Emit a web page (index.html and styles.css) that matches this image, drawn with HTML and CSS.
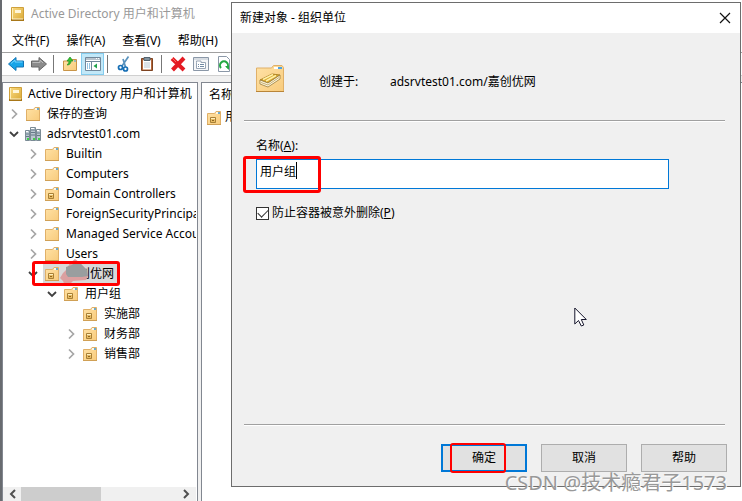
FILE: index.html
```html
<!DOCTYPE html>
<html lang="zh-CN">
<head>
    <meta charset="UTF-8">
    <meta name="viewport" content="width=device-width, initial-scale=1.0">
    <title>Active Directory 用户和计算机</title>
    <link rel="stylesheet" href="styles.css">
</head>
<body>
    <!-- Shared icons -->
    <svg class="icon-defs" aria-hidden="true">
        <defs>
            <linearGradient id="gold" x1="0" y1="0" x2="1" y2="1">
                <stop offset="0" stop-color="#ffe2a6"/>
                <stop offset="1" stop-color="#f8cb7c"/>
            </linearGradient>
            <linearGradient id="book" x1="0" y1="0" x2="1" y2="1">
                <stop offset="0" stop-color="#fbdc84"/>
                <stop offset="1" stop-color="#d9a834"/>
            </linearGradient>
        </defs>
        <symbol id="icon-folder" viewBox="0 0 16 16">
            <path d="M1.500 14.500V3.500h7l1.500-2h4.500v13z" fill="url(#gold)" stroke="#e0b068"/>
            <path d="M10 3h2" stroke="#fff" stroke-width="1.500"/>
            <path d="M12 3h2" stroke="#3d9be0" stroke-width="1.500"/>
            <path d="M1 14.500h14" stroke="#d0a055"/>
        </symbol>
        <symbol id="icon-ou" viewBox="0 0 16 16">
            <use href="#icon-folder"/>
            <path d="M4.500 7.500h5v5h-5z" fill="#e8bb62" stroke="#a88036"/>
            <path d="M5 8.500h4" stroke="#fff0c0"/>
            <path d="M6 10.500h2" stroke="#8d6420"/>
        </symbol>
        <symbol id="icon-book" viewBox="0 0 16 16">
            <path d="M1.500 1.500h12v13h-12z" fill="url(#book)" stroke="#cfa03a"/>
            <path d="M2.500 2v11" stroke="#fff0b8"/>
            <path d="M5 4h6v3H5z" fill="#fff6d8"/>
            <path d="M1 14h13" stroke="#a87718" stroke-width="2"/>
            <path d="M2 13h11" stroke="#fff3cc"/>
        </symbol>
        <symbol id="icon-domain" viewBox="0 0 16 16">
            <path d="M.5 4.500h4v10h-4zM11.500 3.500h4v11h-4zM5.500 1.500h5v13h-5z" fill="#bac7cf" stroke="#7a8b95"/>
            <path d="M6 4h4M6 6.500h4M6 9h4M1 8h3M12 7h3M1 10.500h3M12 9.500h3" stroke="#65798a"/>
            <path d="M6 2.500h3M1 5.500h2M12 4.500h2" stroke="#fff"/>
            <path d="M2 12h2v2H2zM8 12h2v2H8zM13 12h2v2h-2z" fill="#3fd24a"/>
        </symbol>
        <symbol id="icon-right" viewBox="0 0 12 12">
            <path d="M4 1.500L8.500 6 4 10.500" fill="none" stroke="#a6a6a6" stroke-width="1.700"/>
        </symbol>
        <symbol id="icon-down" viewBox="0 0 12 12">
            <path d="M2 4l4 4 4-4" fill="none" stroke="#404040" stroke-width="1.800"/>
        </symbol>
    </svg>

    <main class="console">
        <header class="console-title">
            <svg class="icon"><use href="#icon-book"/></svg>
            <h1>Active Directory 用户和计算机</h1>
        </header>

        <nav class="menu">
            <a href="#">文件(F)</a>
            <a href="#">操作(A)</a>
            <a href="#">查看(V)</a>
            <a href="#">帮助(H)</a>
        </nav>

        <div class="toolbar">
            <button type="button" aria-label="后退">
                <svg viewBox="0 0 16 16"><path d="M.5 8L8 1.500V5h7.500v6H8v3.500z" fill="#18a4e8" stroke="#1274b4"/><path d="M3 7.500L7 4v2h7.500" fill="none" stroke="#74d4ff"/></svg>
            </button>
            <button type="button" aria-label="前进">
                <svg viewBox="0 0 16 16"><path d="M15.500 8L8 1.500V5H.5v6H8v3.500z" fill="#8b8b8b" stroke="#666"/><path d="M1.500 6.500H9V4l3 3" fill="none" stroke="#bbb"/></svg>
            </button>
            <span class="separator"></span>
            <button type="button" aria-label="上一级">
                <svg viewBox="0 0 16 16"><path d="M1.500 14.500V5H6l2-1.500h6.500v11z" fill="url(#gold)" stroke="#c99548"/><path d="M5 9c3 0 4-2 4-4h2L8 1 5 5h2c0 2-1 3-2 4z" fill="#35c52c" stroke="#1f8d22" stroke-width=".7"/><path d="M12 5h2" stroke="#3d9be0"/></svg>
            </button>
            <button type="button" class="pressed" aria-label="显示控制台树">
                <svg viewBox="0 0 16 16"><path d="M.5 1.500h15v13H.5z" fill="#fff" stroke="#71879a"/><path d="M1 3h14M1 5.500h14M6.500 6v8" stroke="#71879a"/><path d="M11 2.500h1M13 2.500h1" stroke="#fff"/><path d="M2 8h1M4 8h1M2 10h1M4 10h1M2 12h1M4 12h1" stroke="#2788c8"/><path d="M12 7.500v5L8.500 10z" fill="#21a34a"/></svg>
            </button>
            <span class="separator"></span>
            <button type="button" aria-label="剪切">
                <svg viewBox="0 0 16 16"><path d="M12.500.5L6 10M7 3l2.500 8" fill="none" stroke="#5b93be" stroke-width="1.700"/><circle cx="4.500" cy="11.500" r="2" fill="none" stroke="#176fb5" stroke-width="1.700"/><circle cx="9.500" cy="13" r="2" fill="none" stroke="#176fb5" stroke-width="1.700"/></svg>
            </button>
            <button type="button" aria-label="粘贴">
                <svg viewBox="0 0 16 16"><path d="M2.500 2.500h11v12h-11z" fill="#b5683c" stroke="#7e4321"/><path d="M4 4h8v9.500H4z" fill="#fff"/><path d="M5 1.500h6v3H5z" fill="#8193a0" stroke="#536471"/><path d="M5 7h6M5 9h6M5 11h6" stroke="#b8c6d2"/></svg>
            </button>
            <span class="separator"></span>
            <button type="button" aria-label="删除">
                <svg viewBox="0 0 16 16"><path d="M2 2.500L14 14M14 2L2.500 14" stroke="#e41b23" stroke-width="4"/><path d="M2 2l4 4" stroke="#ff6a62"/></svg>
            </button>
            <button type="button" aria-label="属性">
                <svg viewBox="0 0 16 16"><path d="M.5 1.500h15v13H.5z" fill="#f5f6f8" stroke="#8b98a8"/><path d="M1 3h14" stroke="#b9c3cd"/><path d="M3.500 6.500V5H8v1.500h4.500v6h-9z" fill="#fff" stroke="#98a5b5"/><path d="M5 8.500h1M7 8.500h4M5 10.500h1M7 10.500h4" stroke="#7189a3"/></svg>
            </button>
            <button type="button" aria-label="刷新">
                <svg viewBox="0 0 16 16"><path d="M2.500.5h8l3 3v12h-11z" fill="#fff" stroke="#8b98a8"/><path d="M5 12a4 4 0 1 1 6 0" fill="none" stroke="#23a842" stroke-width="2"/><path d="M9 10h4v4z" fill="#23a842"/></svg>
            </button>
        </div>

        <div class="panes">
            <section class="tree-pane">
                <div class="tree">
                    <div class="node root"><svg class="icon"><use href="#icon-book"/></svg><span>Active Directory 用户和计算机</span></div>
                    <ul>
                        <li><div class="node"><svg class="arrow"><use href="#icon-right"/></svg><svg class="icon"><use href="#icon-folder"/></svg><span>保存的查询</span></div></li>
                        <li>
                            <div class="node"><svg class="arrow"><use href="#icon-down"/></svg><svg class="icon"><use href="#icon-domain"/></svg><span>adsrvtest01.com</span></div>
                            <ul>
                                <li><div class="node"><svg class="arrow"><use href="#icon-right"/></svg><svg class="icon"><use href="#icon-folder"/></svg><span>Builtin</span></div></li>
                                <li><div class="node"><svg class="arrow"><use href="#icon-right"/></svg><svg class="icon"><use href="#icon-folder"/></svg><span>Computers</span></div></li>
                                <li><div class="node"><svg class="arrow"><use href="#icon-right"/></svg><svg class="icon"><use href="#icon-ou"/></svg><span>Domain Controllers</span></div></li>
                                <li><div class="node"><svg class="arrow"><use href="#icon-right"/></svg><svg class="icon"><use href="#icon-folder"/></svg><span>ForeignSecurityPrincipals</span></div></li>
                                <li><div class="node"><svg class="arrow"><use href="#icon-right"/></svg><svg class="icon"><use href="#icon-folder"/></svg><span>Managed Service Accounts</span></div></li>
                                <li><div class="node"><svg class="arrow"><use href="#icon-right"/></svg><svg class="icon"><use href="#icon-folder"/></svg><span>Users</span></div></li>
                                <li>
                                    <div class="node selected">
                                        <svg class="arrow"><use href="#icon-down"/></svg><svg class="icon"><use href="#icon-ou"/></svg><span>嘉创优网</span>
                                        <svg class="smudge" viewBox="0 0 30 28"><path d="M0 20l3-5 3-3 4-7 5-4 4 3 8 8 1 6-2 4-13 1-4 4-4 1-2-5z" fill="#dba0a0"/><path d="M6 9l6-2 4-4 5 3 6 6 1 6-6 1H8l-2-3z" fill="#999e9f"/></svg>
                                        <i class="mark mark-node"></i>
                                    </div>
                                    <ul>
                                        <li>
                                            <div class="node"><svg class="arrow"><use href="#icon-down"/></svg><svg class="icon"><use href="#icon-ou"/></svg><span>用户组</span></div>
                                            <ul>
                                                <li><div class="node"><svg class="arrow"></svg><svg class="icon"><use href="#icon-ou"/></svg><span>实施部</span></div></li>
                                                <li><div class="node"><svg class="arrow"><use href="#icon-right"/></svg><svg class="icon"><use href="#icon-ou"/></svg><span>财务部</span></div></li>
                                                <li><div class="node"><svg class="arrow"><use href="#icon-right"/></svg><svg class="icon"><use href="#icon-ou"/></svg><span>销售部</span></div></li>
                                            </ul>
                                        </li>
                                    </ul>
                                </li>
                            </ul>
                        </li>
                    </ul>
                </div>
                <div class="scrollbar">
                    <svg viewBox="0 0 12 12"><path d="M8 2L4 6l4 4" fill="none" stroke="#505050" stroke-width="2"/></svg>
                    <div class="track"><div class="thumb"></div></div>
                    <svg viewBox="0 0 12 12"><path d="M4 2l4 4-4 4" fill="none" stroke="#505050" stroke-width="2"/></svg>
                </div>
            </section>

            <section class="list-pane">
                <table>
                    <thead><tr><th>名称</th></tr></thead>
                    <tbody><tr><td><svg class="icon"><use href="#icon-ou"/></svg>用户组</td></tr></tbody>
                </table>
            </section>
        </div>
    </main>

    <!-- New organizational unit dialog -->
    <form class="dialog" role="dialog" aria-labelledby="dialogTitle">
        <header class="dialog-title">
            <h2 id="dialogTitle">新建对象 - 组织单位</h2>
            <button type="button" class="close" aria-label="关闭">
                <svg viewBox="0 0 12 12"><path d="M1 1l10 10M11 1L1 11" stroke="#111" stroke-width="1.200"/></svg>
            </button>
        </header>

        <div class="dialog-body">
            <div class="location">
                <svg viewBox="0 0 30 28">
                    <path d="M1.500 26.500V3h15l2-2.500H27l1.500 2v24z" fill="url(#gold)" stroke="#e0b068"/>
                    <path d="M19 3h4" stroke="#fff" stroke-width="2"/>
                    <path d="M23 3h4" stroke="#4aa3e4" stroke-width="2"/>
                    <path d="M1 26.500h28" stroke="#b98538"/>
                    <path d="M5 15l12-6 8 1-12 8z" fill="#d9a92f" stroke="#a07416" stroke-width=".8"/>
                    <path d="M8 14.500l10-5M11 16l10-5.500" stroke="#fff0a8" stroke-width="1.500"/>
                    <path d="M5 15l8 3 12-8v4l-12 8-8-3z" fill="#fff8e0" stroke="#987b3b" stroke-width=".8"/>
                    <path d="M6 17.500l7 2.500 11-7.500" fill="none" stroke="#b89b55" stroke-width=".8"/>
                </svg>
                <span class="location-label">创建于:</span>
                <span>adsrvtest01.com/嘉创优网</span>
            </div>
            <hr>
            <div class="fields">
                <label class="name-label" for="ouName">名称(<u>A</u>):</label>
                <div class="name-field">
                    <input type="text" id="ouName" value="用户组">
                    <i class="caret"></i>
                    <i class="mark mark-name"></i>
                </div>
                <label class="protect"><input type="checkbox" checked><span>防止容器被意外删除(<u>P</u>)</span></label>
            </div>
            <hr>
            <div class="actions">
                <button type="submit" class="default">确定<i class="mark mark-ok"></i></button>
                <button type="button">取消</button>
                <button type="button">帮助</button>
            </div>
        </div>
    </form>

    <svg class="pointer" viewBox="0 0 13 20"><path d="M.8 1v16l3.700-3.500 2.800 5.500 2.500-1-2.500-5.500h5z" fill="#fff" stroke="#15152b"/></svg>
    <p class="watermark">CSDN @技术瘾君子1573</p>
</body>
</html>
```
FILE: styles.css
```css
* {
    box-sizing: border-box;
}
body {
    margin: 0;
    font-family: "Noto Sans", "Noto Sans CJK SC", sans-serif;
    font-size: 12px;
    line-height: 20px;
    color: #000;
    background: #fff;
}
h1, h2, p, ul {
    margin: 0;
    padding: 0;
    font-size: 12px;
    font-weight: normal;
}
button, input {
    font: inherit;
    color: inherit;
}
svg {
    flex: none;
}
.icon-defs {
    position: absolute;
    width: 0;
    height: 0;
}
.icon {
    width: 16px;
    height: 16px;
}
.mark {
    position: absolute;
    border: 3px solid #f00;
    border-radius: 3px;
    pointer-events: none;
}

/* Console window */
.console {
    display: flex;
    flex-direction: column;
    height: 100vh;
    border-left: 2px solid #686b70;
    overflow: hidden;
}
.console-title {
    display: flex;
    align-items: center;
    gap: 5px;
    height: 28px;
    padding-left: 8px;
    color: #999;
}
.menu {
    display: flex;
    gap: 17px;
    height: 25px;
    padding: 3px 10px 0;
    border-bottom: 1px solid #a0a0a0;
}
.menu a {
    color: #000;
    text-decoration: none;
}
.toolbar {
    display: flex;
    align-items: center;
    height: 23px;
    padding-left: 2px;
    border-bottom: 1px solid #d0d0d0;
}
.toolbar button {
    display: flex;
    align-items: center;
    justify-content: center;
    width: 23px;
    height: 22px;
    padding: 0;
    border: 1px solid transparent;
    background: none;
}
.toolbar button.pressed {
    border-color: #84ccee;
    background: #c2e8f8;
}
.toolbar svg {
    width: 16px;
    height: 16px;
}
.separator {
    width: 1px;
    height: 18px;
    margin: 0 4px 0 3px;
    background: #777;
}
.panes {
    display: flex;
    flex: 1;
    gap: 3px;
    min-height: 0;
    padding-top: 6px;
    background: #f0f0f0;
}
.tree-pane {
    display: flex;
    flex-direction: column;
    flex: none;
    width: 196px;
    padding-right: 1px;
    border: 1px solid #828790;
    border-bottom: 0;
    background: #fff;
}
.tree {
    flex: 1;
    padding-top: 1px;
    overflow: hidden;
    white-space: nowrap;
}
.tree ul {
    list-style: none;
}
.tree ul ul {
    padding-left: 19px;
}
.node {
    position: relative;
    display: flex;
    align-items: center;
    height: 20px;
    padding-left: 5px;
}
.node .icon {
    margin: 0 6px 0 5px;
}
.node.root {
    padding-left: 0;
}
.node.root .icon {
    margin-right: 4px;
}
.arrow {
    width: 12px;
    height: 12px;
}
.node.selected::before {
    content: "";
    position: absolute;
    left: 21px;
    width: 74px;
    height: 20px;
    background: #d9d9d9;
}
.node.selected > .icon, .node.selected > span {
    position: relative;
}
.smudge {
    position: absolute;
    left: 38px;
    top: -6px;
    width: 30px;
    height: 28px;
}
.mark-node {
    left: 10px;
    top: -3px;
    width: 88px;
    height: 25px;
}
.scrollbar {
    display: flex;
    align-items: center;
    height: 14px;
    padding: 0 2px;
    background: #f0f0f0;
}
.scrollbar svg {
    width: 12px;
    height: 12px;
    margin: 0 2px;
}
.track {
    flex: 1;
    height: 14px;
}
.thumb {
    width: 51%;
    height: 14px;
    background: #cdcdcd;
}
.list-pane {
    flex: 1;
    padding: 2px 4px;
    border: 1px solid #828790;
    border-width: 1px 0 0 1px;
    background: #fff;
}
.list-pane table {
    border-collapse: collapse;
}
.list-pane th, .list-pane td {
    padding: 0 0 2px;
    font-weight: normal;
    text-align: left;
}
.list-pane th {
    padding-left: 3px;
}
.list-pane .icon {
    margin-right: 3px;
    vertical-align: middle;
}

/* Dialog */
.dialog {
    position: absolute;
    left: 231px;
    right: 1px;
    top: 2px;
    border: 1px solid #6d6d6d;
    background: #f0f0f0;
}
.dialog-title {
    display: flex;
    align-items: center;
    justify-content: space-between;
    height: 30px;
    padding: 0 9px 0 8px;
    background: #fff;
}
.close {
    display: flex;
    padding: 0;
    border: 0;
    background: none;
}
.close svg {
    width: 12px;
    height: 12px;
}
.dialog-body {
    padding: 30px 13px 14px 12px;
}
.location {
    display: flex;
    align-items: center;
    height: 38px;
    padding-left: 11px;
}
.location svg {
    width: 30px;
    height: 28px;
    margin: 0 34px 6px 0;
}
.location-label {
    width: 71px;
}
hr {
    height: 2px;
    margin: 19px 2px 0 0;
    border: 0;
    border-top: 1px solid #a0a0a0;
    background: #fff;
}
.fields {
    height: 283px;
    padding: 14px 0 0 12px;
}
.name-label {
    display: block;
}
.name-field {
    position: relative;
    max-width: 413px;
    margin: 3px 0 13px;
}
.name-field input {
    display: block;
    width: 100%;
    height: 30px;
    padding: 0 3px 6px;
    border: 1px solid #0078d7;
    background: #fff;
    outline: 0;
}
.caret {
    position: absolute;
    left: 40px;
    top: 3px;
    width: 1px;
    height: 17px;
    background: #000;
}
.mark-name {
    left: -13px;
    top: -3px;
    width: 78px;
    height: 37px;
}
.protect {
    display: inline-flex;
    align-items: center;
    gap: 3px;
}
.protect input {
    appearance: none;
    width: 13px;
    height: 13px;
    margin: 0;
    border: 1px solid #333;
    background: #fff;
}
.protect input:checked {
    display: grid;
    place-items: center;
}
.protect input:checked::before {
    content: "";
    width: 9px;
    height: 5px;
    border: solid #333;
    border-width: 0 0 1px 1px;
    transform: translateY(-1px) rotate(-45deg);
}
.actions {
    display: flex;
    justify-content: flex-end;
    gap: 14px;
    padding-top: 18px;
}
.actions button {
    position: relative;
    width: 86px;
    height: 28px;
    padding: 0;
    border: 1px solid #adadad;
    background: #e1e1e1;
}
.actions .default {
    border: 2px solid #0078d7;
}
.mark-ok {
    left: 7px;
    top: -3px;
    width: 56px;
    height: 30px;
    border-width: 2px;
}

.pointer {
    position: absolute;
    left: 574px;
    top: 307px;
    width: 13px;
    height: 20px;
}
.watermark {
    position: absolute;
    right: 15px;
    bottom: 6px;
    font-size: 20px;
    line-height: 24px;
    color: #999;
    text-shadow: 1px 1px 0 #fff;
}
```
